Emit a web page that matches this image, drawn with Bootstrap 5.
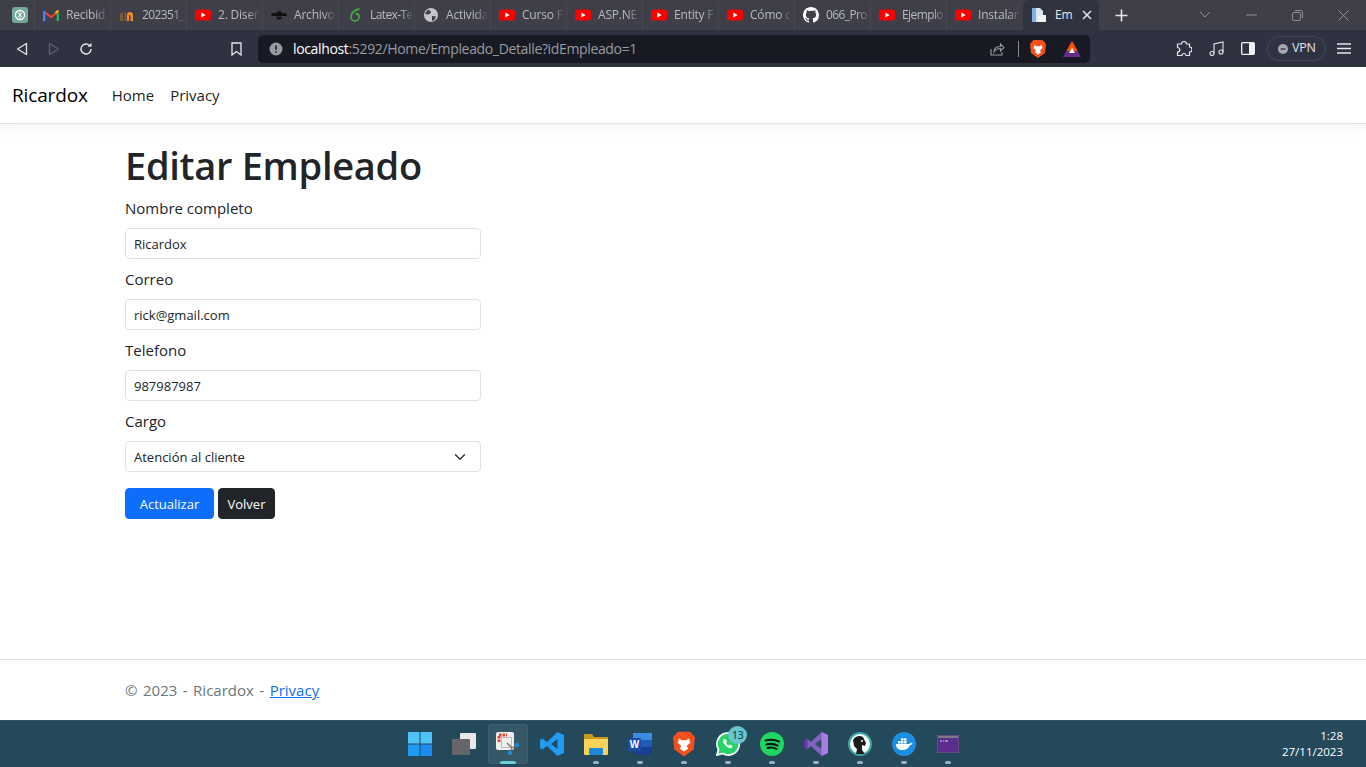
<!DOCTYPE html>
<html lang="es">
<head>
    <meta charset="UTF-8">
    <meta name="viewport" content="width=device-width, initial-scale=1.0">
    <title>Editar Empleado - Ricardox</title>
    <link href="https://cdn.jsdelivr.net/npm/bootstrap@5.3.0/dist/css/bootstrap.min.css" rel="stylesheet">
    <style>
        html, body { height: 100%; }
        body { font-family: "Open Sans", "Noto Sans", sans-serif; color: #212529; overflow: hidden; }
        .page-wrap { height: 767px; }

        /* browser chrome */
        .tab-strip { height: 30px; background: #3e3f49; color: #b9bac0; font-size: 12px; letter-spacing: -.2px; }
        .tab-item { width: 76px; height: 30px; padding: 0 2px 0 8px; border-right: 1px solid #47484f; gap: 7px; flex: none; }
        .tab-pin { width: 35px; padding-left: 12px; }
        .tab-tight { padding-right: 0; letter-spacing: -.6px; }
        .tab-label { overflow: hidden; white-space: nowrap; flex: 1 1 0; min-width: 0;
            -webkit-mask-image: linear-gradient(to right, #000 70%, transparent 100%);
            mask-image: linear-gradient(to right, #000 70%, transparent 100%); }
        .tab-active { width: 76px; height: 30px; background: #31343f; color: #e8e8ea; border-radius: 6px 6px 0 0; padding: 0 7px 0 8px; gap: 8px; flex: none; }
        .tab-active-label { flex: 1 1 0; white-space: nowrap; }
        .win-btns { gap: 0; color: #8f9097; }
        .win-btn { width: 46px; height: 30px; }

        .tool-bar { height: 37px; background: #2f3241; color: #e6e6ea; }
        .addr-box { position: relative; width: 832px; height: 28px; background: #171a23; border-radius: 5px; margin-left: 16px; font-size: 14px; color: #9a9ba2; letter-spacing: -.35px; }
        .addr-host { color: #fff; }
        .vpn-pill { width: 59px; height: 25px; padding: 0 0 0 10px; border: 1px solid #454858; border-radius: 13px; font-size: 12.5px; gap: 4px; letter-spacing: -.2px; }

        /* app */
        .app-nav { height: 57px; box-shadow: 0 .25rem .75rem rgba(0, 0, 0, .05); }
        .app-nav .navbar-brand { font-size: 19px; letter-spacing: -.15px; margin-right: 16px; padding: 0; }
        .app-nav .nav-link { color: rgba(0, 0, 0, .9); font-size: 15px; padding: 8px 8px; }
        .page-title { font-size: 38px; font-weight: 600; letter-spacing: -.3px; line-height: 48px; margin-top: 1px; margin-bottom: 7px; }
        .field-label { font-size: 15px; line-height: 24px; margin-bottom: 8px; display: block; }
        .form-control-sm, .form-select-sm { font-size: 13px; height: 31px; }
        .form-select-sm { padding-top: 5px; padding-bottom: 3px; }
        .btn-save, .btn-back { font-size: 13px; height: 31px; padding: 2px 0 0; }
        .btn-save { width: 89px; }
        .btn-back { width: 57px; margin-left: 1px; }
        .btn-row { margin-top: 16px; gap: 3px; }
        .page-foot { height: 61px; font-size: 15px; line-height: 60px; color: #6c757d; word-spacing: 1.6px; }

        /* windows taskbar */
        .task-bar { position: relative; height: 47px; background: #24495a; border-top: 1px solid #2f5567; }
        .task-icons { gap: 0; margin-left: 2px; }
        .task-slot { position: relative; width: 44px; height: 46px; }
        .task-slot svg { display: block; }
        .task-now { background: rgba(255, 255, 255, .08); width: 40px; height: 40px; margin: 0 2px; border-radius: 4px; border: 1px solid rgba(255, 255, 255, .06); }
        .task-dot { position: absolute; left: 19px; bottom: 3px; width: 6px; height: 3px; border-radius: 2px; background: #9fb0b8; }
        .task-dot-on { left: 11px; bottom: -1px; width: 16px; background: #66d0da; }
        .task-badge { position: absolute; top: 5px; left: 22px; width: 19px; height: 18px; border-radius: 50%; background: #66c7d0; color: #10303c; font-size: 11px; line-height: 18px; text-align: center; letter-spacing: -.5px; }
        .task-clock { position: absolute; right: 23px; top: 7px; font-size: 11.5px; line-height: 16px; color: #fff; text-align: right; }
    </style>
</head>
<body>
<svg width="0" height="0" class="position-absolute">
    <symbol id="yt" viewBox="0 0 16 12">
        <rect width="16" height="11" y=".5" rx="3" fill="#f00"/>
        <path d="M6.3 3.5v5l4.4-2.5z" fill="#fff"/>
    </symbol>
</svg>

<div class="page-wrap d-flex flex-column">
    <!-- pestañas -->
    <div class="tab-strip d-flex align-items-center">
        <div class="tab-item tab-pin d-flex align-items-center">
            <svg width="16" height="16" viewBox="0 0 16 16"><rect width="16" height="16" rx="3" fill="#74aa9c"/><circle cx="8" cy="8" r="4.600" fill="none" stroke="#fff" stroke-width="1.200"/><path d="M5.500 5.500l5 5M10.500 5.500l-5 5M8 3v10" stroke="#fff" stroke-width=".8"/></svg>
        </div>
        <div class="tab-item d-flex align-items-center">
            <svg width="16" height="12" viewBox="0 0 16 12"><path d="M1.500 3l6.500 5 6.500-5" fill="none" stroke="#ea4335" stroke-width="2.200"/><path d="M1.200 12V2" stroke="#4285f4" stroke-width="2.400"/><path d="M14.800 12V4" stroke="#34a853" stroke-width="2.400"/><path d="M15.500 1.500l-3 2.500" stroke="#fbbc04" stroke-width="2.200"/></svg>
            <span class="tab-label">Recibid</span>
        </div>
        <div class="tab-item tab-tight d-flex align-items-center">
            <svg width="16" height="12" viewBox="0 0 16 12"><path d="M1 12V5l3-2v9zM5.500 3.500h2v8.500h-2z" fill="#7b5a3c"/><path d="M8 12V6a3 3 0 0 1 6 0v6h-2.500V6.500a1 1 0 0 0-1.500 0V12z" fill="#f58a1f"/></svg>
            <span class="tab-label">202351_</span>
        </div>
        <div class="tab-item d-flex align-items-center">
            <svg width="16" height="12"><use href="#yt"/></svg>
            <span class="tab-label">2. Diseñ</span>
        </div>
        <div class="tab-item d-flex align-items-center">
            <svg width="16" height="12" viewBox="0 0 16 12"><ellipse cx="8" cy="6" rx="3" ry="4.500" fill="#111"/><ellipse cx="3.500" cy="5.500" rx="3.500" ry="1.500" fill="#111"/><ellipse cx="12.500" cy="5.500" rx="3.500" ry="1.500" fill="#111"/><path d="M5 7.500h6M5.500 2.500h5" stroke="#3e3f49" stroke-width=".7"/></svg>
            <span class="tab-label">Archivo</span>
        </div>
        <div class="tab-item tab-tight d-flex align-items-center">
            <svg width="16" height="16" viewBox="0 0 16 16"><path d="M12.500 2C9 2.500 4 5 4 10a4 4 0 0 0 8 0c0-2-1.500-3.500-3.500-3.500" fill="none" stroke="#47a141" stroke-width="1.800"/></svg>
            <span class="tab-label">Latex-Te</span>
        </div>
        <div class="tab-item d-flex align-items-center">
            <svg width="16" height="16" viewBox="0 0 16 16"><circle cx="8" cy="8" r="7" fill="#c4c5c9"/><path d="M5 2.500l3 2-1 2.500-3 .5-2-1zM9 9l4 .5-1.500 3.500-2.500 1z" fill="#3e3f49"/></svg>
            <span class="tab-label">Activida</span>
        </div>
        <div class="tab-item d-flex align-items-center">
            <svg width="16" height="12"><use href="#yt"/></svg>
            <span class="tab-label">Curso F</span>
        </div>
        <div class="tab-item d-flex align-items-center">
            <svg width="16" height="12"><use href="#yt"/></svg>
            <span class="tab-label">ASP.NE</span>
        </div>
        <div class="tab-item d-flex align-items-center">
            <svg width="16" height="12"><use href="#yt"/></svg>
            <span class="tab-label">Entity F</span>
        </div>
        <div class="tab-item d-flex align-items-center">
            <svg width="16" height="12"><use href="#yt"/></svg>
            <span class="tab-label">Cómo c</span>
        </div>
        <div class="tab-item tab-tight d-flex align-items-center">
            <svg width="16" height="16" viewBox="0 0 16 16"><path fill="#fff" d="M8 0C3.580 0 0 3.580 0 8c0 3.540 2.290 6.530 5.470 7.590.4.070.55-.17.55-.38 0-.19-.01-.82-.01-1.490-2.010.370-2.530-.490-2.690-.940-.09-.230-.48-.940-.82-1.130-.28-.150-.68-.520-.01-.530.630-.010 1.080.580 1.230.820.720 1.210 1.870.870 2.330.660.070-.520.280-.870.510-1.070-1.780-.200-3.640-.890-3.640-3.950 0-.870.310-1.590.820-2.150-.080-.200-.360-1.020.080-2.120 0 0 .670-.210 2.200.820.640-.180 1.320-.270 2-.270s1.360.090 2 .270c1.530-1.040 2.200-.820 2.200-.820.440 1.100.160 1.920.080 2.120.510.560.820 1.270.820 2.150 0 3.070-1.870 3.750-3.650 3.950.290.250.540.730.540 1.480 0 1.070-.010 1.930-.010 2.200 0 .210.150.460.550.380A8.010 8.010 0 0 0 16 8c0-4.420-3.580-8-8-8z"/></svg>
            <span class="tab-label">066_Pro</span>
        </div>
        <div class="tab-item tab-tight d-flex align-items-center">
            <svg width="16" height="12"><use href="#yt"/></svg>
            <span class="tab-label">Ejemplo</span>
        </div>
        <div class="tab-item d-flex align-items-center border-0">
            <svg width="16" height="12"><use href="#yt"/></svg>
            <span class="tab-label">Instalar</span>
        </div>
        <div class="tab-active d-flex align-items-center">
            <svg width="16" height="16" viewBox="0 0 16 16"><path d="M1 1h8l3 3v11H1z" fill="#d9e6f2"/><path d="M1 1h4v14H1z" fill="#7fb2dc"/><rect x="7" y="8" width="8" height="7" fill="#eef1f4"/></svg>
            <span class="tab-active-label">Em</span>
            <svg width="10" height="10" viewBox="0 0 10 10"><path d="M1 1l8 8M9 1l-8 8" stroke="#e8e8ea" stroke-width="1.500"/></svg>
        </div>
        <svg class="ms-3" width="13" height="13" viewBox="0 0 13 13"><path d="M6.500 .5v12M.5 6.500h12" stroke="#e8e8ea" stroke-width="1.600"/></svg>
        <div class="win-btns d-flex ms-auto">
            <div class="win-btn d-flex align-items-center justify-content-center">
                <svg width="12" height="8" viewBox="0 0 12 8"><path d="M1 1l5 5 5-5" fill="none" stroke="currentColor"/></svg>
            </div>
            <div class="win-btn d-flex align-items-center justify-content-center">
                <svg width="11" height="2" viewBox="0 0 11 2"><path d="M0 1h11" stroke="currentColor"/></svg>
            </div>
            <div class="win-btn d-flex align-items-center justify-content-center">
                <svg width="11" height="11" viewBox="0 0 11 11"><rect x=".5" y="2.500" width="8" height="8" rx="1.500" fill="none" stroke="currentColor"/><path d="M3 .5h6a1.500 1.500 0 0 1 1.500 1.500v6" fill="none" stroke="currentColor"/></svg>
            </div>
            <div class="win-btn d-flex align-items-center justify-content-center">
                <svg width="11" height="11" viewBox="0 0 11 11"><path d="M.5.500l10 10M10.500.500l-10 10" stroke="currentColor"/></svg>
            </div>
        </div>
    </div>

    <!-- barra de direcciones -->
    <div class="tool-bar d-flex align-items-center">
        <svg class="ms-3" width="12" height="14" viewBox="0 0 12 14"><path d="M10.500 1.500v11L1.500 7z" fill="none" stroke="#e6e6ea" stroke-width="1.300" stroke-linejoin="round"/></svg>
        <svg style="margin-left:20px" width="12" height="14" viewBox="0 0 12 14"><path d="M1.500 1.500v11l9-5.500z" fill="none" stroke="#5d6070" stroke-width="1.300" stroke-linejoin="round"/></svg>
        <svg style="margin-left:19px" width="14" height="14" viewBox="0 0 14 14"><path d="M12 7a5 5 0 1 1-1.500-3.600" fill="none" stroke="#e6e6ea" stroke-width="1.400"/><path d="M12.500 .8v4h-4z" fill="#e6e6ea"/></svg>
        <svg style="margin-left:138px" width="11" height="14" viewBox="0 0 11 14"><path d="M1 1h9v12L5.500 9.500 1 13z" fill="none" stroke="#e6e6ea" stroke-width="1.300"/></svg>
        <div class="addr-box d-flex align-items-center">
            <svg style="margin-left:11px" width="14" height="14" viewBox="0 0 14 14"><circle cx="7" cy="7" r="6.500" fill="#9a9ba2"/><path d="M7 3.500v4.200M7 9.300v1.300" stroke="#171a23" stroke-width="1.600"/></svg>
            <span style="margin-left:10px"><span class="addr-host">localhost</span>:5292/Home/Empleado_Detalle?idEmpleado=1</span>
            <svg class="ms-auto" width="15" height="14" viewBox="0 0 15 14"><path d="M1 7v6h11V10" fill="none" stroke="#9a9ba2" stroke-width="1.100"/><path d="M4 10c0-4 3-5.500 6.500-5.500V2L14 5.500 10.500 9V6.500C8 6.500 5.500 7.500 4 10z" fill="none" stroke="#9a9ba2" stroke-width="1.100"/></svg>
            <span style="width:1px;height:16px;background:#8d8e95;margin:0 11px 0 13px"></span>
            <svg width="16" height="18" viewBox="0 0 16 18"><path d="M3.500 0h9L16 4l-1 9-7 5-7-5L0 4z" fill="#f4511e"/><path d="M4.500 5l2 1.200h3l2-1.200 1 3-2.500 2.500 1 2-3 2-3-2 1-2L3.500 8z" fill="#fff"/></svg>
            <svg style="margin:0 9px 0 17px" width="18" height="16" viewBox="0 0 18 16"><path d="M9 0l9 16H0z" fill="#662d91"/><path d="M9 0l5.500 10h-11z" fill="#ff5000"/><path d="M9 6.500l3 5.500H6z" fill="#fff"/></svg>
        </div>
        <svg style="margin-left:86px" width="16" height="16" viewBox="0 0 16 16"><path d="M5.500 3a2.500 2.500 0 0 1 5 0h3v3a2.500 2.500 0 0 1 0 5v3.500h-3.500a2 2 0 0 0-4 0H1.500V11a2.200 2.200 0 0 0 0-4.500V3z" fill="none" stroke="#e6e6ea" stroke-width="1.200" stroke-linejoin="round"/></svg>
        <svg style="margin-left:17px" width="15" height="15" viewBox="0 0 15 15"><circle cx="3" cy="12.500" r="2" fill="none" stroke="#e6e6ea" stroke-width="1.100"/><circle cx="12" cy="11" r="2" fill="none" stroke="#e6e6ea" stroke-width="1.100"/><path d="M5 12.500V3l9-2v10" fill="none" stroke="#e6e6ea" stroke-width="1.100"/></svg>
        <svg style="margin-left:17px" width="14" height="13" viewBox="0 0 14 13"><rect x=".7" y=".7" width="12.600" height="11.600" rx="1" fill="none" stroke="#f2f2f4" stroke-width="1.300"/><rect x="8" y="1" width="5" height="11" fill="#f2f2f4"/></svg>
        <div class="vpn-pill d-flex align-items-center" style="margin-left:12px">
            <svg width="10" height="10" viewBox="0 0 10 10"><circle cx="5" cy="5" r="5" fill="#a6a8b4"/><path d="M2.500 5h5" stroke="#2f3241" stroke-width="1.300"/></svg>
            <span>VPN</span>
        </div>
        <svg style="margin-left:11px" width="14" height="11" viewBox="0 0 14 11"><path d="M0 1h14M0 5.500h14M0 10h14" stroke="#e6e6ea" stroke-width="1.300"/></svg>
    </div>

    <!-- sitio -->
    <nav class="navbar navbar-expand-sm navbar-light bg-white border-bottom app-nav flex-none">
        <div class="container-fluid justify-content-start">
            <a class="navbar-brand" href="#">Ricardox</a>
            <ul class="navbar-nav flex-row">
                <li class="nav-item"><a class="nav-link" href="#">Home</a></li>
                <li class="nav-item"><a class="nav-link" href="#">Privacy</a></li>
            </ul>
        </div>
    </nav>

    <main class="container flex-grow-1 mt-3">
        <h1 class="page-title">Editar Empleado</h1>
        <form class="row">
            <div class="col-sm-4">
                <div class="mb-2">
                    <label class="field-label" for="nombre">Nombre completo</label>
                    <input class="form-control form-control-sm" id="nombre" type="text" value="Ricardox">
                </div>
                <div class="mb-2">
                    <label class="field-label" for="correo">Correo</label>
                    <input class="form-control form-control-sm" id="correo" type="text" value="rick@gmail.com">
                </div>
                <div class="mb-2">
                    <label class="field-label" for="telefono">Telefono</label>
                    <input class="form-control form-control-sm" id="telefono" type="text" value="987987987">
                </div>
                <div class="mb-2">
                    <label class="field-label" for="cargo">Cargo</label>
                    <select class="form-select form-select-sm" id="cargo">
                        <option>Atención al cliente</option>
                    </select>
                </div>
                <div class="d-flex btn-row">
                    <button class="btn btn-primary btn-sm btn-save" type="button">Actualizar</button>
                    <a class="btn btn-dark btn-sm btn-back d-flex align-items-center justify-content-center" href="#">Volver</a>
                </div>
            </div>
        </form>
    </main>

    <footer class="border-top page-foot flex-none">
        <div class="container">© 2023 - Ricardox - <a href="#">Privacy</a></div>
    </footer>

    <!-- barra de tareas -->
    <div class="task-bar d-flex justify-content-center flex-none">
        <div class="task-icons d-flex">
            <div class="task-slot d-flex align-items-center justify-content-center">
                <svg width="24" height="24" viewBox="0 0 24 24"><rect width="11.500" height="11.500" fill="#4fc3f7"/><rect x="12.500" width="11.500" height="11.500" fill="#4fc3f7"/><rect y="12.500" width="11.500" height="11.500" fill="#1e9bf0"/><rect x="12.500" y="12.500" width="11.500" height="11.500" fill="#1a8cf0"/></svg>
            </div>
            <div class="task-slot d-flex align-items-center justify-content-center">
                <svg width="24" height="24" viewBox="0 0 24 24"><rect x="8" y="1" width="16" height="16" rx="1" fill="#e8e8e8"/><rect y="7" width="18" height="16" rx="1" fill="#666"/></svg>
            </div>
            <div class="task-slot d-flex align-items-center justify-content-center">
                <div class="task-now d-flex align-items-center justify-content-center position-relative">
                    <svg width="26" height="26" viewBox="0 0 26 26"><rect x="1" y="1" width="18" height="18" rx="2" fill="#eee"/><path d="M4 11V4h8" fill="none" stroke="#d84a2e" stroke-width="3" stroke-dasharray="2.500 1"/><rect x="6.500" y="6.500" width="10" height="10" fill="none" stroke="#bbb"/><path d="M12 12l5 5M17 17l-2 3M17 17l3-2" stroke="#777" stroke-width="1.300"/><circle cx="22" cy="14" r="2.300" fill="#1e88d8"/><circle cx="15" cy="22" r="2.300" fill="#1e88d8"/></svg>
                    <span class="task-dot task-dot-on"></span>
                </div>
            </div>
            <div class="task-slot d-flex align-items-center justify-content-center">
                <svg width="24" height="24" viewBox="0 0 24 24"><path d="M17.500 0L24 3v18l-6.500 3L7 14l-4.500 3.500L0 16v-8l2.500-1.500L7 10zM17.500 7L11 12l6.500 5z" fill="#1f9cf0" fill-rule="evenodd"/></svg>
            </div>
            <div class="task-slot d-flex align-items-center justify-content-center">
                <svg width="24" height="22" viewBox="0 0 24 22"><path d="M0 2a1 1 0 0 1 1-1h7l2 3h13a1 1 0 0 1 1 1v3H0z" fill="#c99a1a"/><path d="M0 6h24v15a1 1 0 0 1-1 1H1a1 1 0 0 1-1-1z" fill="#fcd35b"/><rect x="5" y="15" width="14" height="7" rx="1" fill="#1e88d8"/></svg>
                <span class="task-dot"></span>
            </div>
            <div class="task-slot d-flex align-items-center justify-content-center">
                <svg width="24" height="24" viewBox="0 0 24 24"><rect x="5" y="1" width="19" height="22" rx="1.500" fill="#1f5cb8"/><rect x="5" y="1" width="19" height="7" fill="#3b8ce0"/><rect x="5" y="15" width="19" height="8" fill="#16408f"/><rect y="6" width="13" height="13" rx="1.500" fill="#1a4fa8"/><text x="6.500" y="16" fill="#fff" font-size="10" font-weight="700" text-anchor="middle" font-family="Liberation Sans, sans-serif">W</text></svg>
                <span class="task-dot"></span>
            </div>
            <div class="task-slot d-flex align-items-center justify-content-center">
                <svg width="22" height="26" viewBox="0 0 16 18"><path d="M3.500 0h9L16 4l-1 9-7 5-7-5L0 4z" fill="#f4511e"/><path d="M4.500 5l2 1.200h3l2-1.200 1 3-2.500 2.500 1 2-3 2-3-2 1-2L3.500 8z" fill="#fff"/></svg>
                <span class="task-dot"></span>
            </div>
            <div class="task-slot d-flex align-items-center justify-content-center">
                <svg width="24" height="24" viewBox="0 0 24 24"><path d="M12 1a11 11 0 0 0-9.500 16.500L1 23l5.700-1.500A11 11 0 1 0 12 1z" fill="#25d366" stroke="#fff" stroke-width="1.800"/><path d="M8 7c-1.500 1.500-1 4 1.500 6.500S14.500 17 16 15.500l.5-1.500-2.500-1.500-1 1c-1 0-3-2-3-3l1-1L9.500 7z" fill="#fff"/></svg>
                <span class="task-badge">13</span>
                <span class="task-dot"></span>
            </div>
            <div class="task-slot d-flex align-items-center justify-content-center">
                <svg width="24" height="24" viewBox="0 0 24 24"><circle cx="12" cy="12" r="12" fill="#1ed760"/><path d="M5.500 8.500c4.500-1.300 9.500-1 13.500 1M6.500 12.500c3.800-1 8-.7 11 1.200M7.500 16c3-.7 6.500-.5 9 1" fill="none" stroke="#111" stroke-width="2" stroke-linecap="round"/></svg>
                <span class="task-dot"></span>
            </div>
            <div class="task-slot d-flex align-items-center justify-content-center">
                <svg width="24" height="24" viewBox="0 0 24 24"><path d="M17.500 0L24 3v18l-6.500 3L7 14l-3.500 3L0 15V9l3.500-2L7 10z" fill="#8661c5"/><path d="M17.500 7L11 12l6.500 5z" fill="#2a4d5e"/><path d="M17.500 0L24 3v18l-6.500 3z" fill="#a77fe0"/><path d="M0 9l3.500-2v10L0 15z" fill="#5c3d99"/></svg>
                <span class="task-dot"></span>
            </div>
            <div class="task-slot d-flex align-items-center justify-content-center">
                <svg width="24" height="24" viewBox="0 0 24 24"><circle cx="12" cy="12" r="11" fill="#fff" stroke="#3aa7a7" stroke-width="2"/><path d="M5 8c2-4 7-5 10-3l3 6-1 3-3-1v5l3 4H8l1-5-3-3z" fill="#1c1c1c"/><circle cx="14" cy="9" r="1" fill="#fff"/></svg>
                <span class="task-dot"></span>
            </div>
            <div class="task-slot d-flex align-items-center justify-content-center">
                <svg width="24" height="24" viewBox="0 0 24 24"><circle cx="12" cy="12" r="12" fill="#1d8fe1"/><path d="M4 12h13c1 0 1.500-1 1.500-1.500l2 .5c-.5 1.500-1.500 2-2.500 2-1 3-4 5-7.500 5C6.500 18 4 16 4 12z" fill="#fff"/><path d="M6 9h2.500v2.500H6zM9 9h2.500v2.500H9zM12 9h2.500v2.500H12zM9 6.300h2.500v2.200H9zM12 6.300h2.500v2.200H12z" fill="#fff"/></svg>
                <span class="task-dot"></span>
            </div>
            <div class="task-slot d-flex align-items-center justify-content-center">
                <svg width="22" height="18" viewBox="0 0 22 18"><rect width="22" height="18" rx="1" fill="#5b2d8e" stroke="#6b6b78"/><path d="M1 1h20v2H1z" fill="#7b7b88"/><path d="M3 6h2M6 6h1M8 6h3" stroke="#ddd" stroke-width="1"/></svg>
                <span class="task-dot"></span>
            </div>
        </div>
        <div class="task-clock">1:28<br>27/11/2023</div>
    </div>
</div>

<script src="https://cdn.jsdelivr.net/npm/bootstrap@5.3.0/dist/js/bootstrap.bundle.min.js"></script>
</body>
</html>
